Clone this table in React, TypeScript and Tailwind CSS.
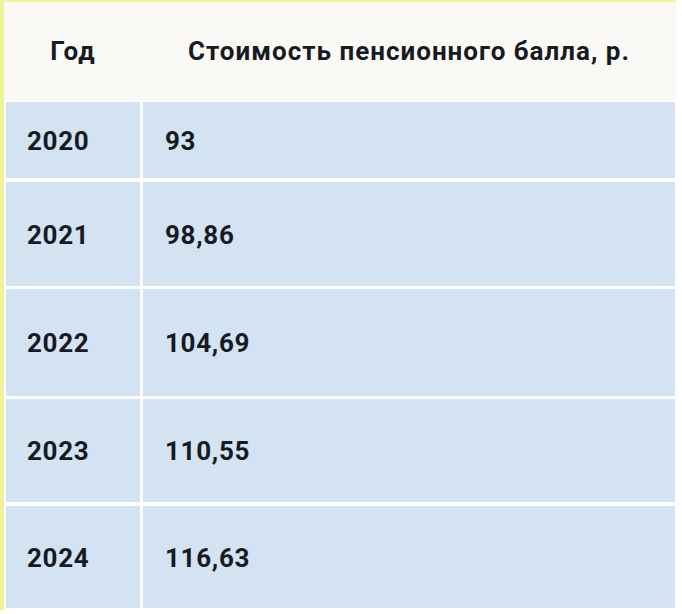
const rows = [
  { year: "2020", value: "93", h: "h-[76px]", mt: "mt-[2px]" },
  { year: "2021", value: "98,86", h: "h-[104px]", mt: "mt-[4px]" },
  { year: "2022", value: "104,69", h: "h-[107px]", mt: "mt-[3px]" },
  { year: "2023", value: "110,55", h: "h-[103px]", mt: "mt-[3px]" },
  { year: "2024", value: "116,63", h: "h-[102px]", mt: "mt-[4px]" },
];

export default function App() {
  return (
    <div className="w-[682px] h-[614px] bg-white font-['Roboto',sans-serif] text-[#161a22] overflow-hidden">
      <div className="w-[676px] h-[610px] border-l-[4px] border-t-[2px] border-[#eef49a] pl-[2px]">
        <div className="flex h-[98px] bg-[#fbf9f6] font-bold text-[26px] tracking-[1px] -ml-[2px] pl-[2px]">
          <div className="w-[134px] flex items-center justify-center">Год</div>
          <div className="ml-[3px] w-[532px] flex items-center justify-center">
            Стоимость пенсионного балла, р.
          </div>
        </div>
        {rows.map((r) => (
          <div key={r.year} className={`flex ${r.h} ${r.mt} font-bold text-[26px] tracking-[0.7px]`}>
            <div className="w-[134px] bg-[#d3e3f1] flex items-center pl-[21px] pt-[2px]">{r.year}</div>
            <div className="ml-[3px] w-[532px] bg-[#d3e3f1] flex items-center pl-[22px] pt-[2px]">
              {r.value}
            </div>
          </div>
        ))}
      </div>
    </div>
  );
}
